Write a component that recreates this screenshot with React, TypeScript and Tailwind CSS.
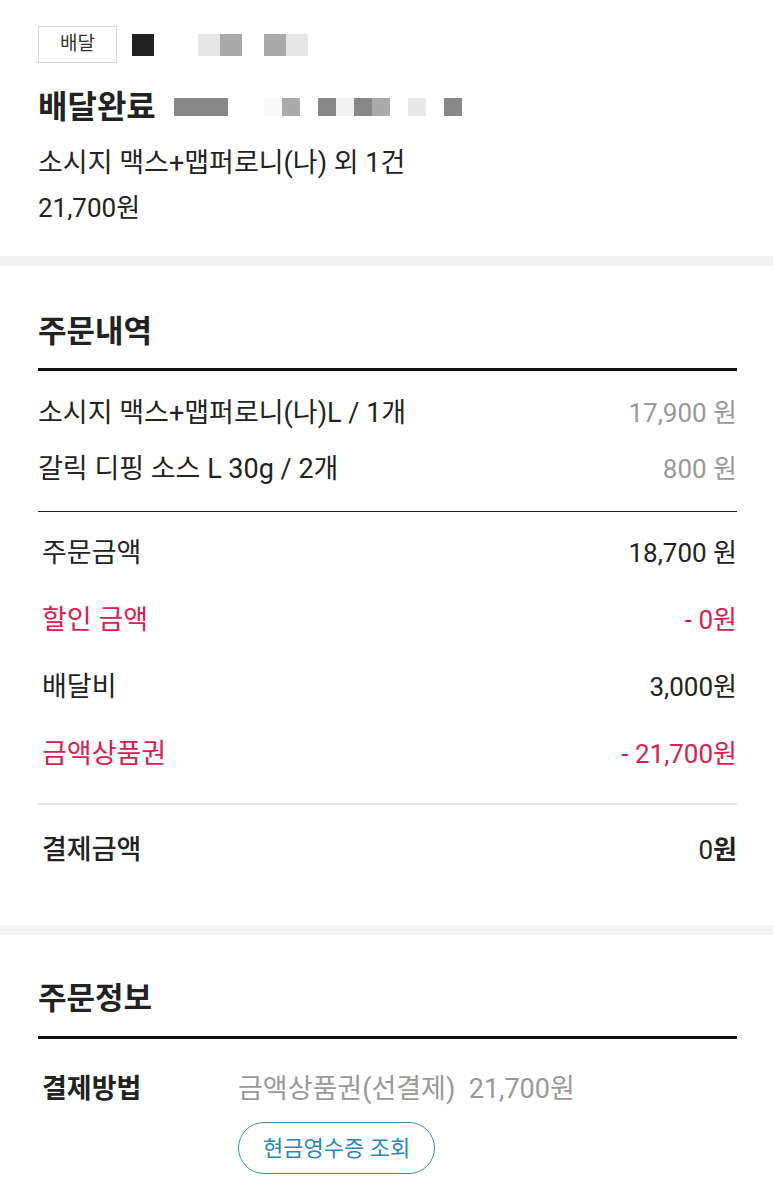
import React from 'react';

const font = { fontFamily: 'Roboto, "Noto Sans CJK KR", sans-serif' };

function Mosaic({ cells, size }: { cells: (string | null)[]; size: string }) {
  return (
    <div className="flex">
      {cells.map((c, i) => (
        <div key={i} className={size} style={{ backgroundColor: c ?? 'transparent' }} />
      ))}
    </div>
  );
}

function SummaryRow({ label, value, red, bold }: { label: string; value: React.ReactNode; red?: boolean; bold?: boolean }) {
  return (
    <div className={`flex items-center justify-between h-[67px] pl-1 ${red ? 'text-[#d6214f]' : 'text-[#222]'}`}>
      <span className={`text-[27px] ${bold ? 'font-medium' : ''}`}>{label}</span>
      <span className="text-[26px]">{value}</span>
    </div>
  );
}

export default function App() {
  return (
    <div className="min-h-screen bg-white text-[#222]" style={font}>
      {/* Header */}
      <section className="pl-[38px] pr-[36px] pt-[26px] pb-[30px]">
        <div className="flex items-center gap-[15px]">
          <div className="w-[79px] h-[37px] border border-[#d8d8d8] flex items-center justify-center text-[19px] text-[#333]">
            배달
          </div>
          <div className="flex items-center gap-[44px]">
            <div className="w-[22px] h-[22px] bg-[#222]" />
            <div className="flex gap-[22px]">
              <Mosaic size="w-[22px] h-[22px]" cells={['#e6e6e6', '#aaaaaa']} />
              <Mosaic size="w-[22px] h-[22px]" cells={['#aaaaaa', '#e6e6e6']} />
            </div>
          </div>
        </div>
        <div className="flex items-center gap-[18px] mt-[24px]">
          <h1 className="text-[32px] font-bold leading-[40px]">배달완료</h1>
          <Mosaic
            size="w-[18px] h-[18px]"
            cells={['#888', '#888', '#888', null, null, '#f8f8f8', '#aaa', null, '#888', '#f2f2f2', '#888', '#aaa', null, '#e8e8e8', null, '#888']}
          />
        </div>
        <p className="text-[27px] mt-[18px] leading-[36px]">소시지 맥스+맵퍼로니(나) 외 1건</p>
        <p className="text-[26px] mt-[9px] leading-[36px]">21,700원</p>
      </section>

      <div className="h-[10px] bg-[#f4f4f4]" />

      {/* 주문내역 */}
      <section className="pl-[38px] pr-[36px] pt-[46px] pb-[41px]">
        <h2 className="text-[31px] font-bold leading-[40px]">주문내역</h2>
        <div className="h-[3px] bg-[#111] mt-[16px]" />
        <div className="pt-[14px] pb-[14px] border-b border-[#222]">
          <div className="flex items-center justify-between h-[56px]">
            <span className="text-[27px]">소시지 맥스+맵퍼로니(나)L / 1개</span>
            <span className="text-[26px] text-[#999]">17,900 원</span>
          </div>
          <div className="flex items-center justify-between h-[56px]">
            <span className="text-[27px]">갈릭 디핑 소스 L 30g / 2개</span>
            <span className="text-[26px] text-[#999]">800 원</span>
          </div>
        </div>
        <div className="pt-[8px] pb-[15px] border-b-2 border-[#e4e4e4]">
          <SummaryRow label="주문금액" value="18,700 원" />
          <SummaryRow label="할인 금액" value="- 0원" red />
          <SummaryRow label="배달비" value="3,000원" />
          <SummaryRow label="금액상품권" value="- 21,700원" red />
        </div>
        <div className="pt-[12px]">
          <SummaryRow label="결제금액" bold value={<>0<span className="font-bold">원</span></>} />
        </div>
      </section>

      <div className="h-[10px] bg-[#f4f4f4]" />

      {/* 주문정보 */}
      <section className="pl-[38px] pr-[36px] pt-[44px] pb-[40px]">
        <h2 className="text-[31px] font-bold leading-[40px]">주문정보</h2>
        <div className="h-[3px] bg-[#111] mt-[17px]" />
        <div className="flex pl-1 pt-[32px]">
          <span className="w-[196px] text-[27px] font-bold leading-[36px]">결제방법</span>
          <div className="flex flex-col items-start">
            <span className="text-[27px] text-[#999] leading-[36px]">
              금액상품권(선결제)&nbsp;&nbsp;21,700원
            </span>
            <button className="mt-[15px] h-[52px] px-[24px] rounded-full border border-[#3a8cba] text-[#2b86b8] text-[22px]">
              현금영수증 조회
            </button>
          </div>
        </div>
      </section>
    </div>
  );
}
